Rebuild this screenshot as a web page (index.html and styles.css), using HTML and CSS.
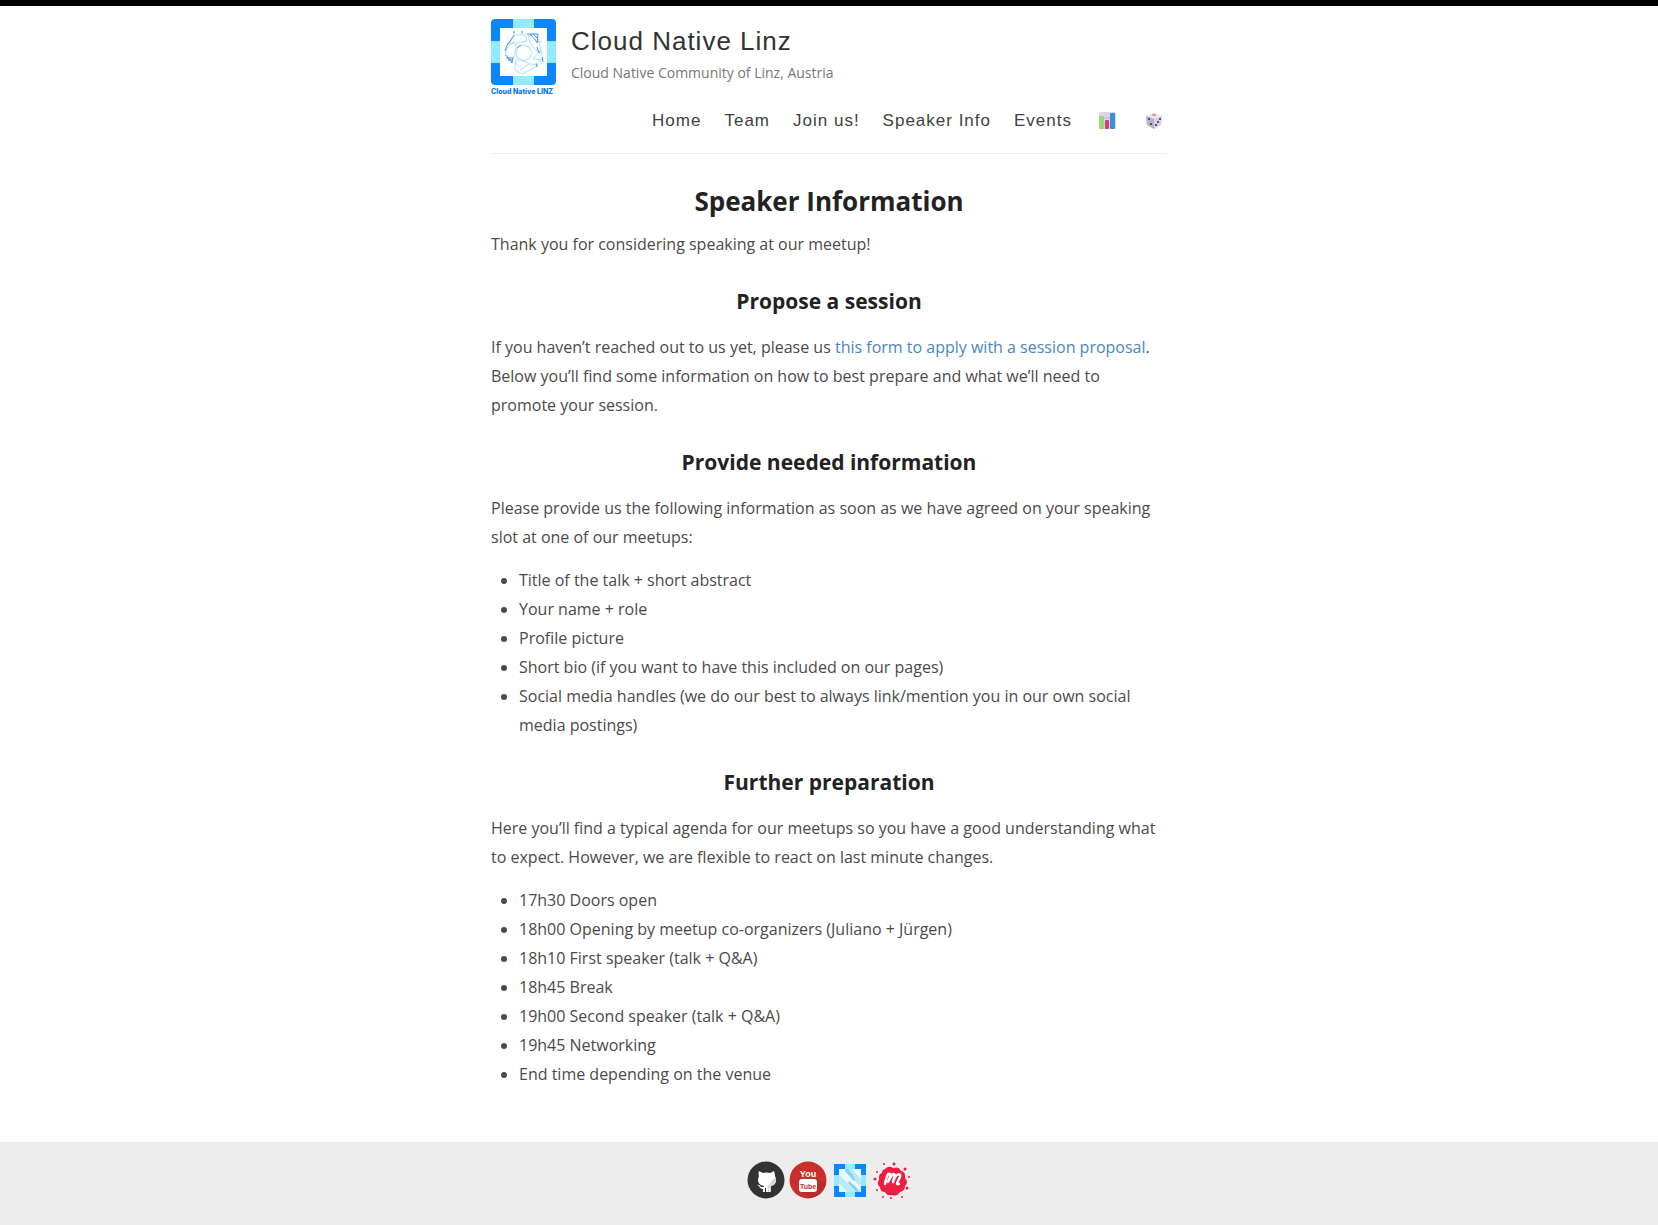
FILE: index.html
```html
<!DOCTYPE html>
<html lang="en">
<head>
<meta charset="utf-8">
<meta name="viewport" content="width=device-width, initial-scale=1">
<title>Speaker Information – Cloud Native Linz</title>
<link rel="stylesheet" href="styles.css">
</head>
<body>
<header class="container masthead">
  <div class="brand">
    <a class="brand-logo" href="#" aria-label="Cloud Native Linz">
      <svg width="66" height="76" viewBox="0 0 66 76">
        <clipPath id="frame"><rect width="65" height="66" rx="4"/></clipPath>
        <g clip-path="url(#frame)">
          <rect width="65" height="66" fill="#0a86ff"/>
          <path d="M22 0h21v66h-21zM0 22h65v22h-65z" fill="#93eaff"/>
          <rect x="9" y="9" width="47" height="48" fill="#fff"/>
        </g>
        <g fill="none" stroke="#a5e2f6" stroke-width="1">
          <path d="M24 16l-6 9 8-1 10-2-1-6zM37 17l8-2 4 12 1 8-5-4-6-8zM50 31l2 10-10-1 5-6zM24 43l5-3 10 5 8 1-8 5-8 4-7-4zM14 36l3-9 6-4 2 4-1 8-3 6zM24 44l6 4M29 51l9-6"/>
          <path d="M32 26l6 2 3 6-3 6-6 2-6-3-1-7 3-5z"/>
          <path d="M46 23l5 0M47 40l4 5"/>
        </g>
        <g fill="none" stroke="#4f94de" stroke-width="1">
          <path d="M36 15l11 0-1 9M39 15l7 8M42 15l5 5M15 36l6 8 1-6M15 39l6 0M17 41l5 0M14 32l3-8M17 25l6-9M23 12v3M31 12v3M51 38l1 5M45 44l1 4M26 29l4-3M46 28l2 6"/>
        </g>
        <text class="logo-caption" x="0" y="75">Cloud Native LINZ</text>
      </svg>
    </a>
    <div class="brand-text">
      <a class="brand-name" href="#">Cloud Native Linz</a>
      <p class="brand-tagline">Cloud Native Community of Linz, Austria</p>
    </div>
  </div>
  <nav class="nav" aria-label="Main">
    <a href="#">Home</a>
    <a href="#">Team</a>
    <a href="#">Join us!</a>
    <a href="#">Speaker Info</a>
    <a href="#">Events</a>
    <a class="nav-icon" href="#" aria-label="Statistics">
      <svg width="18" height="18" viewBox="0 0 18 18">
        <rect width="17" height="17" x="1" rx="2" fill="#dcd6e2"/>
        <path d="M1 6h16M1 11h16" stroke="#c0b8ca"/>
        <rect x="1" y="4" width="5" height="13" rx="1" fill="#94dc72"/>
        <rect x="7" y="8" width="4" height="9" rx="1" fill="#d93a7c"/>
        <rect x="12" y="1" width="5" height="16" rx="1" fill="#3c8fd2"/>
      </svg>
    </a>
    <a class="nav-icon" href="#" aria-label="Random">
      <svg width="18" height="18" viewBox="0 0 18 18">
        <path d="M9 1l8 3-1 9-7 4-7-4-1-9z" fill="#d6cfe0"/>
        <path d="M9 1l8 3-8 3-8-3z" fill="#ece6ef"/>
        <path d="M1 4l8 3v10l-7-4z" fill="#b9aecb"/>
        <ellipse cx="9" cy="3" rx="2" ry="1" fill="#e58a72"/>
        <g fill="#3b3048"><circle cx="4" cy="7" r="1"/><circle cx="6" cy="12" r="1"/><circle cx="15" cy="7" r="1"/><circle cx="13" cy="10" r="1"/><circle cx="11" cy="13" r="1"/></g>
      </svg>
    </a>
  </nav>
</header>

<main class="container content">
  <h1>Speaker Information</h1>
  <p>Thank you for considering speaking at our meetup!</p>

  <h2>Propose a session</h2>
  <p>If you haven’t reached out to us yet, please us <a href="#">this form to apply with a session proposal</a>. Below you’ll find some information on how to best prepare and what we’ll need to promote your session.</p>

  <h2>Provide needed information</h2>
  <p>Please provide us the following information as soon as we have agreed on your speaking slot at one of our meetups:</p>
  <ul>
    <li>Title of the talk + short abstract</li>
    <li>Your name + role</li>
    <li>Profile picture</li>
    <li>Short bio (if you want to have this included on our pages)</li>
    <li>Social media handles (we do our best to always link/mention you in our own social media postings)</li>
  </ul>

  <h2>Further preparation</h2>
  <p>Here you’ll find a typical agenda for our meetups so you have a good understanding what to expect. However, we are flexible to react on last minute changes.</p>
  <ul>
    <li>17h30 Doors open</li>
    <li>18h00 Opening by meetup co-organizers (Juliano + Jürgen)</li>
    <li>18h10 First speaker (talk + Q&amp;A)</li>
    <li>18h45 Break</li>
    <li>19h00 Second speaker (talk + Q&amp;A)</li>
    <li>19h45 Networking</li>
    <li>End time depending on the venue</li>
  </ul>
</main>

<footer class="footer">
  <a href="#" aria-label="GitHub">
    <svg width="38" height="38" viewBox="0 0 38 38">
      <circle cx="19" cy="19" r="18.500" fill="#333"/>
      <path d="M12 10l4 2q3-1 7 0l4-2q1 3 1 5 1 2 1 4 0 5-5 6v6h-2v-4h-1v4h-2v-4h-1v4h-2v-3q-3 0-4-3l-2-1q2-1 4 2l3 0 0-1q-6-1-6-6 0-2 1-4-1-2 0-5z" fill="#fff"/>
      <path d="M28 16q1 2 1 3 0 5-5 6v6h-1v-4h-1v4h-1v-6z" fill="#d8d8d8"/>
    </svg>
  </a>
  <a href="#" aria-label="YouTube">
    <svg width="38" height="38" viewBox="0 0 38 38">
      <circle cx="19" cy="19" r="18.500" fill="#c9302c"/>
      <path d="M28 18l9 5q-3 12-16 14l-9-6z" fill="#b92c29"/>
      <rect x="10" y="18" width="18" height="13" rx="3" fill="#fff"/>
      <text class="yt-text yt-you" x="19" y="16">You</text>
      <text class="yt-text yt-tube" x="19" y="28">Tube</text>
    </svg>
  </a>
  <a href="#" aria-label="CNCF">
    <svg width="38" height="38" viewBox="0 0 38 38">
      <rect x="3" y="3" width="32" height="33" fill="#0a86ff"/>
      <path d="M14 3h10v33h-10zM3 14h32v11h-32z" fill="#93eaff"/>
      <rect x="8" y="8" width="22" height="23" fill="#eef6f9"/>
      <path d="M14 8h7l9 10v7h-1L14 9zM8 14h1l15 17h-8l-8-9z" fill="#b4ecf8"/>
      <path d="M14 8h3l5 6 3 6-3-1-8-9zM18 20l6 5 5 6h-4l-8-9z" fill="#84d3f2"/>
    </svg>
  </a>
  <a href="#" aria-label="Meetup">
    <svg width="38" height="38" viewBox="0 0 38 38">
      <g fill="#ed1c40">
        <path d="M12 8q4-4 8-1 6-2 8 3 5 1 4 7 4 4 0 8 0 5-5 6-3 5-8 3-5 1-7-3-5 0-5-5-4-3-1-7-1-6 3-7 0-3 3-4z"/>
        <circle cx="21" cy="3" r="1.500"/><circle cx="11" cy="3" r="1"/><circle cx="32" cy="8" r="1.500"/><circle cx="4" cy="11" r="1"/><circle cx="2" cy="18" r="1.500"/><circle cx="36" cy="16" r="1"/><circle cx="34" cy="27" r="1.500"/><circle cx="4" cy="29" r="1"/><circle cx="10" cy="36" r="1"/><circle cx="18" cy="37" r="1"/><circle cx="29" cy="36" r="1"/>
      </g>
      <path d="M12 23q1-6 3-10 3-1 2 3l-2 5q3-6 5-8 3 0 1 4l-1 4q2-6 4-7 4-2 3 2l-3 6q0 2 2 1" fill="none" stroke="#fff" stroke-width="2.500" stroke-linecap="round" stroke-linejoin="round"/>
    </svg>
  </a>
</footer>
</body>
</html>
```
FILE: styles.css
```css
* {
  box-sizing: border-box;
}

body {
  display: flex;
  flex-direction: column;
  min-height: 100vh;
  margin: 0;
  border-top: 6px solid #000;
  background: #fff;
  color: #4a4a4a;
  font-family: "Open Sans", "Noto Sans", sans-serif;
  font-size: 16px;
  line-height: 29px;
}

a {
  color: #4a86c0;
  text-decoration: none;
}

.container {
  width: 100%;
  max-width: 676px;
  margin: 0 auto;
}

.masthead {
  padding: 13px 0 18px;
  border-bottom: 1px solid #eee;
}

.brand {
  display: flex;
  gap: 14px;
}

.brand-logo svg,
.nav-icon svg,
.footer svg {
  display: block;
}

.brand-name {
  display: block;
  color: #333;
  font: 26px/32px "Liberation Sans", Arial, sans-serif;
  letter-spacing: 1px;
  padding-top: 6px;
}

.brand-tagline {
  margin: 5px 0 0;
  color: #777;
  font-size: 14px;
  line-height: 22px;
}

.logo-caption {
  fill: #0a78e8;
  font: 800 7px Inter, "Liberation Sans", sans-serif;
}

.nav {
  display: flex;
  flex-wrap: wrap;
  justify-content: flex-end;
  align-items: center;
  gap: 23px;
  margin-top: 11px;
  padding-right: 1px;
}

.nav a {
  color: #404040;
  font: 17px/29px "Liberation Sans", Arial, sans-serif;
  letter-spacing: 1px;
}

.nav .nav-icon {
  padding: 0 3px;
}

h1,
h2 {
  color: #222;
  font-weight: 700;
  text-align: center;
}

h1 {
  margin: 28px 0 10px;
  font-size: 26px;
  line-height: 38px;
}

h2 {
  margin: 28px 0 18px;
  font-size: 21px;
  line-height: 28px;
}

p,
ul {
  margin: 0 0 14px;
}

ul {
  padding-left: 28px;
}

.content {
  flex: 1;
  padding-bottom: 38px;
}

.footer {
  display: flex;
  justify-content: center;
  gap: 4px;
  padding: 19px 0 26px;
  background: #ededed;
}

.yt-text {
  font: bold 9px "Liberation Sans", Arial, sans-serif;
  text-anchor: middle;
}

.yt-you {
  fill: #fff;
}

.yt-tube {
  fill: #c9302c;
  font-size: 7px;
}
```
